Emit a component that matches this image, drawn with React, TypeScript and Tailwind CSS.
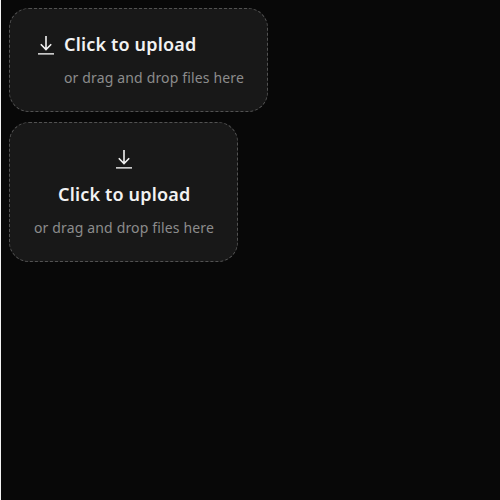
function DownloadIcon() {
  return (
    <svg className="size-6 shrink-0" viewBox="0 0 24 24" fill="none" stroke="#f2f2f2" strokeWidth="1.6">
      <path d="M12 3v13.5M6.8 11.2l5.2 5.3 5.2-5.3" />
      <path d="M4 20.85h16" stroke="#c8c8c8" strokeWidth="1.7" />
    </svg>
  );
}

function Title() {
  return (
    <div className="h-6 w-[131px] whitespace-nowrap text-left text-[18px] leading-[22px] font-semibold tracking-[0.17px] text-[#f2f2f2]">
      Click to upload
    </div>
  );
}

function Hint() {
  return (
    <div className="h-[18px] w-[179px] whitespace-nowrap text-left text-[14px] leading-[18px] tracking-[0.15px] text-[#8c8c8c]">
      or drag and drop files here
    </div>
  );
}

export default function App() {
  return (
    <main className="flex min-h-screen flex-col items-start gap-2.5 border-l border-[#f2f2f2] bg-[#080808] p-2 font-['Noto_Sans',sans-serif]">
      <button className="flex h-[104px] w-[259px] items-start gap-1.5 rounded-[20px] border border-dashed border-[#525252] bg-[#181818] p-6 text-left">
        <DownloadIcon />
        <div className="flex flex-col gap-3">
          <Title />
          <Hint />
        </div>
      </button>
      <button className="flex h-[140px] w-[229px] flex-col items-center gap-3 rounded-[20px] border border-dashed border-[#525252] bg-[#181818] p-6">
        <DownloadIcon />
        <Title />
        <Hint />
      </button>
    </main>
  );
}
